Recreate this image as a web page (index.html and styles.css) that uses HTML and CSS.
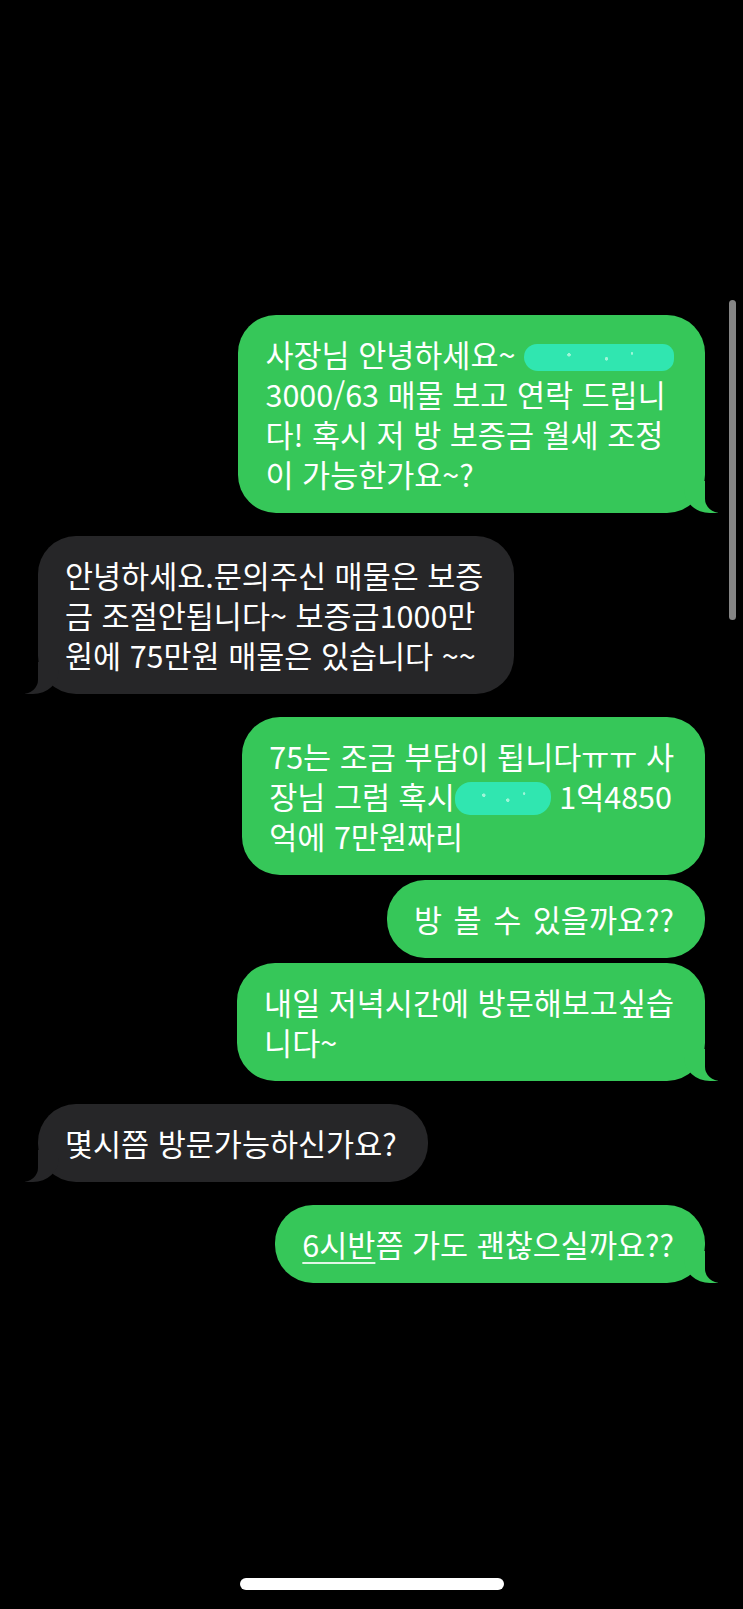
FILE: index.html
```html
<!DOCTYPE html>
<html lang="ko">

<head>
    <meta charset="UTF-8">
    <meta name="viewport" content="width=device-width, initial-scale=1.0">
    <title>메시지</title>
    <link rel="stylesheet" href="styles.css">
</head>

<body>
    <div class="screen">
        <div class="thread">
            <div class="msg sent tail">사장님 안녕하세요~ <span class="scribble scribble-long"></span><br>3000/63 매물 보고 연락 드립니<br>다! 혹시 저 방 보증금 월세 조정<br>이 가능한가요~?</div>

            <div class="msg received tail">안녕하세요.문의주신 매물은 보증<br>금 조절안됩니다~ 보증금1000만<br>원에 75만원 매물은 있습니다 ~~</div>

            <div class="msg sent">75는 조금 부담이 됩니다ㅠㅠ 사<br>장님 그럼 혹시<span class="scribble scribble-short"></span> 1억4850<br>억에 7만원짜리</div>
            <div class="msg sent wide-gap">방 볼 수 있을까요??</div>
            <div class="msg sent tail">내일 저녁시간에 방문해보고싶습<br>니다~</div>

            <div class="msg received tail">몇시쯤 방문가능하신가요?</div>

            <div class="msg sent tail"><span class="link">6시반</span>쯤 가도 괜찮으실까요??</div>
        </div>

        <div class="scrollbar"></div>
        <div class="home-bar"></div>
    </div>
</body>

</html>
```

FILE: styles.css
```css
body {
    margin: 0;
    background-color: #000;
    font-family: "Noto Sans CJK KR", "Noto Sans", sans-serif;
    color: #fff;
}

.screen {
    position: relative;
    display: flex;
    flex-direction: column;
    min-height: 1609px;
}

.thread {
    display: flex;
    flex-direction: column;
    gap: 5px;
    padding: 315px 38px 0 38px;
}

.msg {
    position: relative;
    z-index: 0;
    padding: 19px 31px 19px 27px;
    border-radius: 38px;
    font-size: 30.5px;
    line-height: 40px;
    white-space: nowrap;
}

.sent {
    align-self: flex-end;
    background-color: #36c759;
}

.received {
    align-self: flex-start;
    background-color: #262628;
}

.sent + .received,
.received + .sent {
    margin-top: 18px;
}

.wide-gap {
    word-spacing: 3px;
}

/* bubble tails */
.tail::before,
.tail::after {
    content: "";
    position: absolute;
    z-index: -1;
    bottom: 0;
    height: 32px;
}

.sent.tail::before {
    right: -13px;
    width: 34px;
    background-color: #36c759;
    border-bottom-left-radius: 26px 24px;
}

.sent.tail::after {
    right: -26px;
    width: 26px;
    background-color: #000;
    border-bottom-left-radius: 16px 14px;
}

.received.tail::before {
    left: -13px;
    width: 34px;
    background-color: #262628;
    border-bottom-right-radius: 26px 24px;
}

.received.tail::after {
    left: -26px;
    width: 26px;
    background-color: #000;
    border-bottom-right-radius: 16px 14px;
}

.link {
    text-decoration: underline;
    text-decoration-thickness: 2px;
    text-underline-offset: 5px;
    text-decoration-color: rgba(255, 255, 255, 0.85);
}

/* marker scribbles hiding the address */
.scribble {
    display: inline-block;
    background-color: #30e6b0;
    background-image:
        radial-gradient(circle at 30% 40%, #9ff5d8 0 1.5px, transparent 2px),
        radial-gradient(circle at 55% 55%, #9ff5d8 0 1.5px, transparent 2px),
        radial-gradient(circle at 72% 35%, #9ff5d8 0 1px, transparent 1.5px);
}

.scribble-long {
    width: 150px;
    height: 27px;
    border-radius: 14px 12px 13px 15px;
    vertical-align: -4px;
}

.scribble-short {
    width: 96px;
    height: 33px;
    border-radius: 16px 14px 17px 15px;
    vertical-align: -6px;
}

.scrollbar {
    position: absolute;
    top: 300px;
    left: 729px;
    width: 7px;
    height: 320px;
    border-radius: 4px;
    background-color: #858585;
}

.home-bar {
    margin: auto auto 19px;
    width: 264px;
    height: 12px;
    border-radius: 6px;
    background-color: #fff;
}
```
